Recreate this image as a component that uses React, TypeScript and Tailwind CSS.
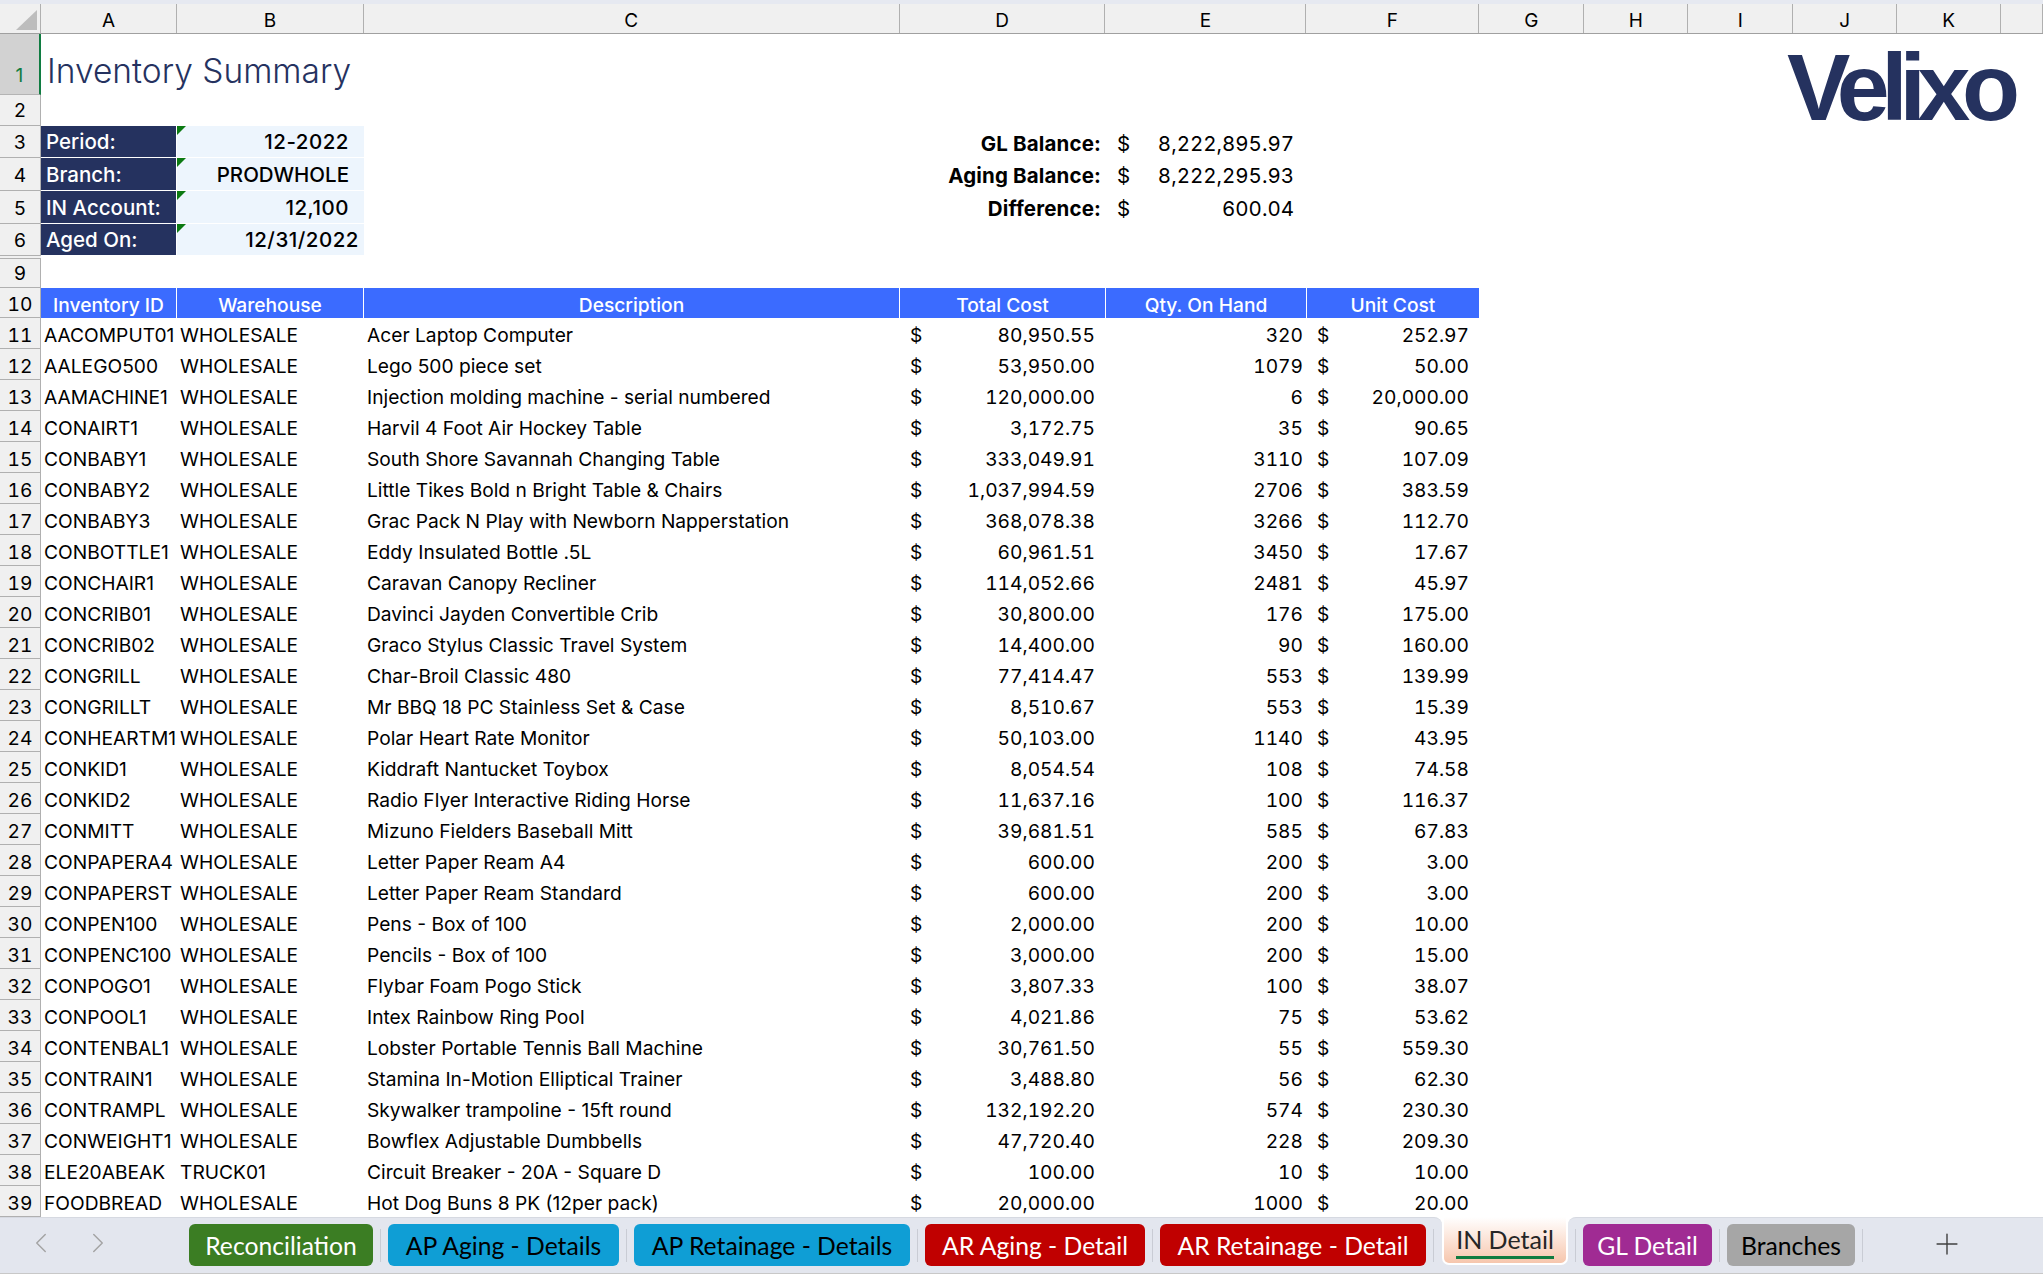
import { ChevronLeft, ChevronRight, Plus } from "lucide-react"

const ROW = "grid grid-cols-[41px_136px_187px_536px_206px_201px_173px]"

const columns = [
  { label: "A", className: "w-[136px]" },
  { label: "B", className: "w-[187px]" },
  { label: "C", className: "w-[536px]" },
  { label: "D", className: "w-[206px]" },
  { label: "E", className: "w-[201px]" },
  { label: "F", className: "w-[173px]" },
  { label: "G", className: "w-[105px]" },
  { label: "H", className: "w-[104px]" },
  { label: "I", className: "w-[105px]" },
  { label: "J", className: "w-[104px]" },
  { label: "K", className: "w-[104px]" },
  { label: "", className: "w-[42px]" },
]

const summary = [
  { row: 3, h: "h-[32px]", label: "Period:", value: "12-2022", pad: "pr-[15px] tracking-[0.5px]", balance: "GL Balance:", amount: "8,222,895.97" },
  { row: 4, h: "h-[33px]", label: "Branch:", value: "PRODWHOLE", pad: "pr-[15px]", balance: "Aging Balance:", amount: "8,222,295.93" },
  { row: 5, h: "h-[33px]", label: "IN Account:", value: "12,100", pad: "pr-[15px] tracking-[0.5px]", balance: "Difference:", amount: "600.04" },
  { row: 6, h: "h-[32px]", label: "Aged On:", value: "12/31/2022", pad: "pr-[5px] tracking-[0.5px]", balance: "", amount: "" },
]

const items = [
  ["AACOMPUT01", "WHOLESALE", "Acer Laptop Computer", "80,950.55", "320", "252.97"],
  ["AALEGO500", "WHOLESALE", "Lego 500 piece set", "53,950.00", "1079", "50.00"],
  ["AAMACHINE1", "WHOLESALE", "Injection molding machine - serial numbered", "120,000.00", "6", "20,000.00"],
  ["CONAIRT1", "WHOLESALE", "Harvil 4 Foot Air Hockey Table", "3,172.75", "35", "90.65"],
  ["CONBABY1", "WHOLESALE", "South Shore Savannah Changing Table", "333,049.91", "3110", "107.09"],
  ["CONBABY2", "WHOLESALE", "Little Tikes Bold n Bright Table & Chairs", "1,037,994.59", "2706", "383.59"],
  ["CONBABY3", "WHOLESALE", "Grac Pack N Play with Newborn Napperstation", "368,078.38", "3266", "112.70"],
  ["CONBOTTLE1", "WHOLESALE", "Eddy Insulated Bottle .5L", "60,961.51", "3450", "17.67"],
  ["CONCHAIR1", "WHOLESALE", "Caravan Canopy Recliner", "114,052.66", "2481", "45.97"],
  ["CONCRIB01", "WHOLESALE", "Davinci Jayden Convertible Crib", "30,800.00", "176", "175.00"],
  ["CONCRIB02", "WHOLESALE", "Graco Stylus Classic Travel System", "14,400.00", "90", "160.00"],
  ["CONGRILL", "WHOLESALE", "Char-Broil Classic 480", "77,414.47", "553", "139.99"],
  ["CONGRILLT", "WHOLESALE", "Mr BBQ 18 PC Stainless Set & Case", "8,510.67", "553", "15.39"],
  ["CONHEARTM1", "WHOLESALE", "Polar Heart Rate Monitor", "50,103.00", "1140", "43.95"],
  ["CONKID1", "WHOLESALE", "Kiddraft Nantucket Toybox", "8,054.54", "108", "74.58"],
  ["CONKID2", "WHOLESALE", "Radio Flyer Interactive Riding Horse", "11,637.16", "100", "116.37"],
  ["CONMITT", "WHOLESALE", "Mizuno Fielders Baseball Mitt", "39,681.51", "585", "67.83"],
  ["CONPAPERA4", "WHOLESALE", "Letter Paper Ream A4", "600.00", "200", "3.00"],
  ["CONPAPERST", "WHOLESALE", "Letter Paper Ream Standard", "600.00", "200", "3.00"],
  ["CONPEN100", "WHOLESALE", "Pens - Box of 100", "2,000.00", "200", "10.00"],
  ["CONPENC100", "WHOLESALE", "Pencils - Box of 100", "3,000.00", "200", "15.00"],
  ["CONPOGO1", "WHOLESALE", "Flybar Foam Pogo Stick", "3,807.33", "100", "38.07"],
  ["CONPOOL1", "WHOLESALE", "Intex Rainbow Ring Pool", "4,021.86", "75", "53.62"],
  ["CONTENBAL1", "WHOLESALE", "Lobster Portable Tennis Ball Machine", "30,761.50", "55", "559.30"],
  ["CONTRAIN1", "WHOLESALE", "Stamina In-Motion Elliptical Trainer", "3,488.80", "56", "62.30"],
  ["CONTRAMPL", "WHOLESALE", "Skywalker trampoline - 15ft round", "132,192.20", "574", "230.30"],
  ["CONWEIGHT1", "WHOLESALE", "Bowflex Adjustable Dumbbells", "47,720.40", "228", "209.30"],
  ["ELE20ABEAK", "TRUCK01", "Circuit Breaker - 20A - Square D", "100.00", "10", "10.00"],
  ["FOODBREAD", "WHOLESALE", "Hot Dog Buns 8 PK (12per pack)", "20,000.00", "1000", "20.00"],
]

const leftTabs = [
  { label: "Reconciliation", className: "w-[184px] bg-[#3b7d23] text-white" },
  { label: "AP Aging - Details", className: "w-[231px] bg-[#0f9ed5] text-black" },
  { label: "AP Retainage - Details", className: "w-[276px] bg-[#0f9ed5] text-black" },
  { label: "AR Aging - Detail", className: "w-[220px] bg-[#c00000] text-white" },
  { label: "AR Retainage - Detail", className: "w-[266px] bg-[#c00000] text-white" },
]

const rightTabs = [
  { label: "GL Detail", className: "w-[129px] bg-[#a02b93] text-white" },
  { label: "Branches", className: "w-[128px] bg-[#a6a6a6] text-black" },
]

function RowNum({ n, low }: { n: number; low?: boolean }) {
  return (
    <div className={`flex items-end justify-center border-r border-b border-[#b0b0b0] bg-[#f0f0f0] tabular-nums ${low ? "pb-[3px]" : "pb-[5px]"}`}>
      {n}
    </div>
  )
}

function Tab({ label, className }: { label: string; className: string }) {
  return (
    <div className={`flex h-[42px] items-center justify-center rounded-[6px] pt-[3px] font-['Lato',sans-serif] text-[24.7px] ${className}`}>
      {label}
    </div>
  )
}

function Divider() {
  return <div className="mx-[7px] mt-[5px] h-[33px] w-px bg-[#c9ccd4]" />
}

export default function App() {
  return (
    <div className="relative flex h-[1274px] w-[2043px] flex-col overflow-hidden bg-white font-['Inter',sans-serif] text-[19.2px] leading-none text-black">
      <div className="h-[4px] bg-[#e6e9f1]" />

      {/* column letters */}
      <div className="flex h-[30px] border-b border-[#a0a0a0] bg-[#f0f0f0]">
        <div className="flex w-[41px] items-end justify-end border-r border-[#b0b0b0] pr-[3px] pb-[3px]">
          <div className="h-[20px] w-[21px] bg-[#bdbdbd] [clip-path:polygon(100%_0,100%_100%,0_100%)]" />
        </div>
        {columns.map((col) => (
          <div key={col.label} className={`flex items-center justify-center border-r border-[#b0b0b0] pt-[3px] text-[19px] ${col.className}`}>
            {col.label}
          </div>
        ))}
      </div>

      {/* logo floats over the cells */}
      <div className="absolute top-[40px] left-[1787px] font-['Liberation_Sans',sans-serif] text-[95px] leading-[1] font-bold tracking-[-8.3px] text-[#25325f]">
        Velixo
      </div>

      <div className={`${ROW} h-[61px]`}>
        <div className="flex items-end justify-center border-r-2 border-b border-r-[#107c41] border-b-[#b4b4b4] bg-[#d2d2d2] pb-[9px] text-[#107c41]">1</div>
        <div className="col-span-3 pt-[17px] pl-[6px] text-[33.5px] leading-[1.2] font-light text-[#25325f]">Inventory Summary</div>
      </div>
      <div className={`${ROW} h-[31px]`}>
        <RowNum n={2} />
      </div>

      {summary.map((s) => (
        <div key={s.row} className={`${ROW} ${s.h} text-[20.5px]`}>
          <div className="grid text-[19.2px]">
            <RowNum n={s.row} />
          </div>
          <div className="flex items-center border-r border-b border-white bg-[#25325f] pt-[2px] pl-[5px] font-medium text-white">{s.label}</div>
          <div className={`relative flex items-center justify-end border-b border-white bg-[#edf5fd] pt-[2px] font-medium ${s.pad}`}>
            <div className="absolute top-0 left-0 size-[9px] bg-[#0c7a12] [clip-path:polygon(0_0,100%_0,0_100%)]" />
            {s.value}
          </div>
          <div />
          <div className="flex items-center justify-end pt-[4px] pr-[5px] font-bold tracking-[0.15px]">{s.balance}</div>
          {s.amount && (
            <div className="flex items-center justify-between pt-[4px] pr-[13px] pl-[11px] tabular-nums">
              <span>$</span>
              <span>{s.amount}</span>
            </div>
          )}
        </div>
      ))}

      <div className={`${ROW} h-[32px]`}>
        <div className="flex flex-col bg-[#f0f0f0]">
          <div className="h-[2px]" />
          <div className="flex flex-1 items-end justify-center border-t border-r border-b border-[#b0b0b0] pb-[4px]">9</div>
        </div>
      </div>

      <div className={`${ROW} h-[30px]`}>
        <RowNum n={10} low />
        {["Inventory ID", "Warehouse", "Description", "Total Cost", "Qty. On Hand", "Unit Cost"].map((h) => (
          <div key={h} className="flex items-end justify-center border-r border-white bg-[#3b6bff] pb-[3px] font-medium text-white">
            {h}
          </div>
        ))}
      </div>

      {items.map((item, i) => (
        <div key={item[0]} className={`${ROW} h-[31px]`}>
          <RowNum n={i + 11} low />
          <div className="flex items-end overflow-hidden pb-[4px] pl-[3px] whitespace-nowrap">{item[0]}</div>
          <div className="flex items-end pb-[4px] pl-[3px]">{item[1]}</div>
          <div className="flex items-end pb-[4px] pl-[3px]">{item[2]}</div>
          <div className="flex items-end justify-between pr-[11px] pb-[4px] pl-[10px] tabular-nums">
            <span>$</span>
            <span>{item[3]}</span>
          </div>
          <div className="flex items-end justify-end pr-[4px] pb-[4px] tabular-nums">{item[4]}</div>
          <div className="flex items-end justify-between pr-[11px] pb-[4px] pl-[10px] tabular-nums">
            <span>$</span>
            <span>{item[5]}</span>
          </div>
        </div>
      ))}

      {/* sheet tabs */}
      <div className="flex h-[57px] flex-none">
        <div className="flex w-[1442px] rounded-tr-[8px] border-t border-b border-t-[#d6d9e1] border-b-[#c8c8c8] bg-[#e3e6ee] pt-[6px]">
          <div className="flex w-[189px] gap-[23px] pt-[2px] pl-[24px] text-[#a3a3a3]">
            <ChevronLeft size={34} strokeWidth={1} />
            <ChevronRight size={34} strokeWidth={1} />
          </div>
          {leftTabs.map((t, i) => (
            <div key={t.label} className="flex">
              {i > 0 && <Divider />}
              <Tab {...t} />
            </div>
          ))}
          <Divider />
        </div>
        <div className="flex w-[126px] flex-col border-b border-[#c8c8c8] bg-[#e3e6ee]">
          <div className="flex h-[48px] flex-col items-center rounded-b-[7px] border-x-2 border-b-2 border-white bg-gradient-to-b from-white to-[#f6c6ad]">
            <div className="flex h-[39px] items-center pt-[6px] font-['Lato',sans-serif] text-[25px] text-[#262626]">IN Detail</div>
            <div className="h-[3px] w-[98px] bg-[#107c41]" />
          </div>
        </div>
        <div className="flex flex-1 rounded-tl-[8px] border-t border-b border-t-[#d6d9e1] border-b-[#c8c8c8] bg-[#e3e6ee] pt-[6px]">
          <Divider />
          <Tab {...rightTabs[0]} />
          <Divider />
          <Tab {...rightTabs[1]} />
          <Divider />
          <div className="ml-[60px] pt-[3px] text-[#404040]">
            <Plus size={34} strokeWidth={1} />
          </div>
        </div>
      </div>
    </div>
  )
}
